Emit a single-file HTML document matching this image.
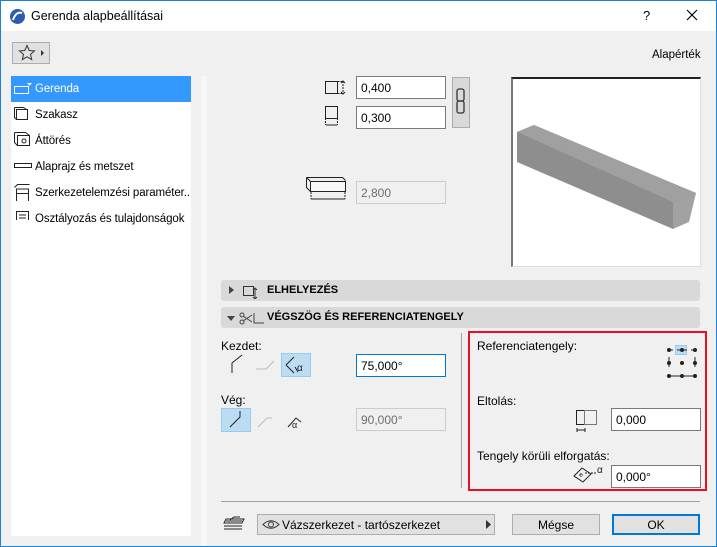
<!DOCTYPE html>
<html><head><meta charset="utf-8"><style>
*{box-sizing:border-box;margin:0;padding:0}
body{width:717px;height:547px;position:relative;overflow:hidden;background:#f0f0f0;font-family:"Liberation Sans",sans-serif;font-size:12px;color:#000}
.a{position:absolute;white-space:nowrap}
.inp{position:absolute;background:#fff;border:1px solid #7a7a7a;height:23px;padding:4px 0 0 4px;font-size:12px}
.hdr{position:absolute;left:221px;width:479px;height:21px;background:#d9d9d9;border-radius:3px;font-weight:bold;font-size:11px}
.it{position:absolute;left:11px;width:180px;height:26px;padding:7px 0 0 24px;font-size:11.5px;white-space:nowrap;overflow:hidden;letter-spacing:-0.1px}
.btn{position:absolute;top:514px;height:21px;background:#e1e1e1;border:1px solid #adadad;text-align:center;padding-top:3px;font-size:12px;white-space:nowrap}
</style></head><body>
<div class="a" style="left:0;top:0;width:717px;height:547px;border:1px solid #1883d7;pointer-events:none;z-index:9"></div>
<div class="a" style="left:0;top:0;width:717px;height:31px;background:#fff"></div>
<svg class="a" style="left:9px;top:8px" width="17" height="17"><circle cx="8.5" cy="8.5" r="7.5" fill="#2a5db0"/><path d="M4 12 Q7 3 13 5" stroke="#fff" stroke-width="2" fill="none"/></svg>
<div class="a" style="left:31px;top:9px;font-size:12.5px">Gerenda alapbeállításai</div>
<div class="a" style="left:643px;top:8px;font-size:13px">?</div>
<svg class="a" style="left:686px;top:9px" width="12" height="12"><path d="M1 1L11 11M11 1L1 11" stroke="#000" stroke-width="1.2"/></svg>
<div class="a" style="left:12px;top:42px;width:38px;height:22px;background:#e1e1e1;border:1px solid #adadad"></div>
<svg class="a" style="left:18px;top:44px" width="30" height="18"><path d="M9 1.5l2.2 5 5.3.4-4 3.5 1.2 5.2L9 12.8l-4.7 2.8 1.2-5.2-4-3.5 5.3-.4z" fill="none" stroke="#333"/><path d="M23 6l3 3-3 3z" fill="#333"/></svg>
<div class="a" style="left:652px;top:49px;font-size:11.5px">Alapérték</div>
<div class="a" style="left:11px;top:76px;width:180px;height:460px;background:#fff"></div>
<div class="a" style="left:201px;top:76px;width:6px;height:471px;background:#f7f7f7"></div>
<div class="it" style="top:76px;background:#3399ff;color:#fff">Gerenda</div>
<div class="it" style="top:102px">Szakasz</div>
<div class="it" style="top:128px">Áttörés</div>
<div class="it" style="top:154px">Alaprajz és metszet</div>
<div class="it" style="top:180px">Szerkezetelemzési paraméter...</div>
<div class="it" style="top:206px">Osztályozás és tulajdonságok</div>
<svg class="a" style="left:13px;top:80px" width="20" height="140" fill="none" stroke="#222">
<rect x="1.5" y="6.5" width="14" height="7" stroke="#fff"/><path d="M14 3h5l-2.5 3z" fill="#fff" stroke="none"/>
<rect x="3.5" y="29.5" width="11" height="10"/><path d="M1.5 27.5h9l3 2M1.5 27.5v10l2 2"/>
<rect x="4.5" y="55.5" width="12" height="10"/><circle cx="11" cy="61" r="2"/><path d="M1.5 52.5h11l4 3M1.5 52.5v10l3 3"/>
<rect x="1.5" y="83.5" width="17" height="4"/>
<path d="M3.5 121v-12h12v12M3.5 113.5h12M1.5 107.5l3-3h12"/>
<rect x="3.5" y="131.5" width="12" height="15"/><path d="M6 135h7M6 138h7M6 141h7"/>
</svg>
<svg class="a" style="left:324px;top:78px" width="26" height="54" fill="none" stroke="#222"><rect x="1.5" y="3.5" width="12" height="12"/><path d="M13.5 3.5h6M13.5 15.5h6M19 3v13" stroke-dasharray="2 1"/><path d="M17 5l2-2 2 2M17 14l2 2 2-2"/><rect x="1.5" y="28.5" width="12" height="12"/><path d="M1.5 40v7M13.5 40v7" stroke-dasharray="2 1"/><path d="M2 47h11"/></svg>
<div class="inp" style="left:356px;top:76px;width:90px">0,400</div>
<div class="inp" style="left:356px;top:106px;width:90px">0,300</div>
<div class="a" style="left:452px;top:77px;width:18px;height:51px;background:#d9d9d9;border:1px solid #adadad"></div>
<svg class="a" style="left:455px;top:87px" width="12" height="30" fill="none" stroke="#333" stroke-width="1.3"><rect x="2" y="2" width="7" height="12" rx="2"/><rect x="2" y="14" width="7" height="12" rx="2"/></svg>
<svg class="a" style="left:305px;top:176px" width="44" height="28" fill="none" stroke="#222"><path d="M1.5 1.5h36l3 3M1.5 1.5l4 4v10M1.5 1.5v10l4 4"/><rect x="5.5" y="5.5" width="35" height="10" fill="#f8f8f8"/><path d="M6 16v7M40 16v7" stroke-dasharray="2 1"/><path d="M6 23h34"/></svg>
<div class="inp" style="left:356px;top:181px;width:90px;background:#f0f0f0;border-color:#ccc;color:#6d6d6d">2,800</div>
<div class="a" style="left:511px;top:77px;width:190px;height:190px;background:#fff;border:1px solid #ddd;border-top:2px solid #222;border-left:2px solid #777"></div>
<svg class="a" style="left:511px;top:77px" width="190" height="190"><path d="M6 55L23 48 185 116 178 130 20 83 6 78z" fill="#8d8d8d"/><path d="M6 55L23 48 185 116 162 125z" fill="#a0a0a0"/><path d="M162 125L185 116 178 145 162 152z" fill="#a2a2a2"/><path d="M6 55L162 125 162 152 6 85z" fill="#8e8e8e"/></svg>
<div class="hdr" style="top:280px"><svg class="a" style="left:8px;top:6px" width="50" height="13" fill="#444"><path d="M0 0l5 4-5 4z"/><rect x="14.5" y="0.5" width="10" height="9" fill="none" stroke="#333"/><path d="M26 3v9M24 4l2-2 2 2M24 11l2 2 2-2" stroke="#333" fill="none"/></svg><span class="a" style="left:46px;top:4px">ELHELYEZÉS</span></div>
<div class="hdr" style="top:307px"><svg class="a" style="left:6px;top:5px" width="40" height="13" fill="none" stroke="#444"><path d="M0 4l8 0-4 5z" fill="#444" stroke="none"/><circle cx="15" cy="3" r="2"/><circle cx="15" cy="10" r="2"/><path d="M16 4l9 6M16 9l9-6M27 1v10h10"/></svg><span class="a" style="left:46px;top:4px">VÉGSZÖG ÉS REFERENCIATENGELY</span></div>
<div class="a" style="left:221px;top:339px">Kezdet:</div>
<svg class="a" style="left:228px;top:353px" width="90" height="24" fill="none" stroke="#222"><path d="M4 20V10l10-8"/><path d="M28 16h10l8-8" stroke="#bbb"/></svg>
<div class="a" style="left:281px;top:353px;width:30px;height:24px;background:#bcdcf4;border:1px solid #99c9ef"></div>
<svg class="a" style="left:283px;top:355px" width="28" height="20" fill="none" stroke="#222"><path d="M3 10l8-8M3 10l8 8M12 12l3 5" /><text x="14" y="16" font-size="10" fill="#222" stroke="none" font-family="Liberation Sans">α</text></svg>
<div class="inp" style="left:356px;top:354px;width:90px;border-color:#0078d7">75,000°</div>
<div class="a" style="left:221px;top:393px">Vég:</div>
<div class="a" style="left:221px;top:408px;width:30px;height:24px;background:#bcdcf4;border:1px solid #99c9ef"></div>
<svg class="a" style="left:221px;top:408px" width="90" height="24" fill="none" stroke="#222"><path d="M9 19l10-10V3"/><path d="M37 19l9-9h5" stroke="#bbb"/><path d="M67 19l8-9 5 4"/><text x="71" y="20" font-size="9" fill="#222" stroke="none" font-family="Liberation Sans">α</text></svg>
<div class="inp" style="left:356px;top:408px;width:90px;background:#f0f0f0;border-color:#ccc;color:#6d6d6d">90,000°</div>
<div class="a" style="left:461px;top:333px;width:1px;height:155px;background:#a0a0a0"></div>
<div class="a" style="left:468px;top:331px;width:239px;height:160px;border:2px solid #e81123"></div>
<div class="a" style="left:477px;top:339px">Referenciatengely:</div>
<div class="a" style="left:675px;top:345px;width:12px;height:10px;background:#bcdcf4;border:1px solid #99c9ef"></div>
<svg class="a" style="left:664px;top:345px" width="36" height="36" fill="#222" stroke="#222"><path d="M3 5h6M13 5h10M27 5h6M3 31h30M5 12v10M31 12v10"/><circle cx="5" cy="5" r="1.5"/><circle cx="18" cy="5" r="1.5"/><circle cx="31" cy="5" r="1.5"/><circle cx="5" cy="18" r="1.5"/><circle cx="18" cy="18" r="1.5"/><circle cx="31" cy="18" r="1.5"/><circle cx="5" cy="31" r="1.5"/><circle cx="18" cy="31" r="1.5"/><circle cx="31" cy="31" r="1.5"/></svg>
<div class="a" style="left:477px;top:394px">Eltolás:</div>
<svg class="a" style="left:575px;top:409px" width="26" height="26" fill="none" stroke="#222"><rect x="1.5" y="1.5" width="8" height="14"/><rect x="9.5" y="1.5" width="12" height="14" stroke="#777"/><path d="M2 21h8M2 19v4M10 19v4"/></svg>
<div class="inp" style="left:611px;top:408px;width:90px">0,000</div>
<div class="a" style="left:477px;top:449px">Tengely körüli elforgatás:</div>
<svg class="a" style="left:571px;top:463px" width="40" height="22" fill="none" stroke="#222"><path d="M3 13l8-8 9 6-8 8z"/><path d="M8 12h4M10 10v4M14 10h12" stroke-dasharray="2 1"/><text x="26" y="10" font-size="10" fill="#222" stroke="none" font-family="Liberation Sans">α</text></svg>
<div class="inp" style="left:611px;top:465px;width:90px">0,000°</div>
<div class="a" style="left:221px;top:501px;width:479px;height:1px;background:#a0a0a0"></div>
<svg class="a" style="left:223px;top:515px" width="26" height="18" fill="none" stroke="#222"><path d="M3 4h18l-2 4H1zM1 11h18M1 14h18M3 6l16 0" /><path d="M7 5l4-3 6 0"/></svg>
<div class="btn" style="left:257px;width:238px;text-align:left;padding-left:24px">Vázszerkezet - tartószerkezet</div>
<svg class="a" style="left:262px;top:519px" width="18" height="11" fill="none" stroke="#333"><path d="M1 5.5Q9 -2 17 5.5Q9 13 1 5.5z"/><circle cx="9" cy="5.5" r="2.5"/></svg>
<svg class="a" style="left:486px;top:520px" width="6" height="9"><path d="M0 0l5 4.5L0 9z" fill="#333"/></svg>
<div class="btn" style="left:512px;width:88px">Mégse</div>
<div class="btn" style="left:612px;width:88px;border:2px solid #0078d7;padding-top:2px">OK</div>
</body></html>
